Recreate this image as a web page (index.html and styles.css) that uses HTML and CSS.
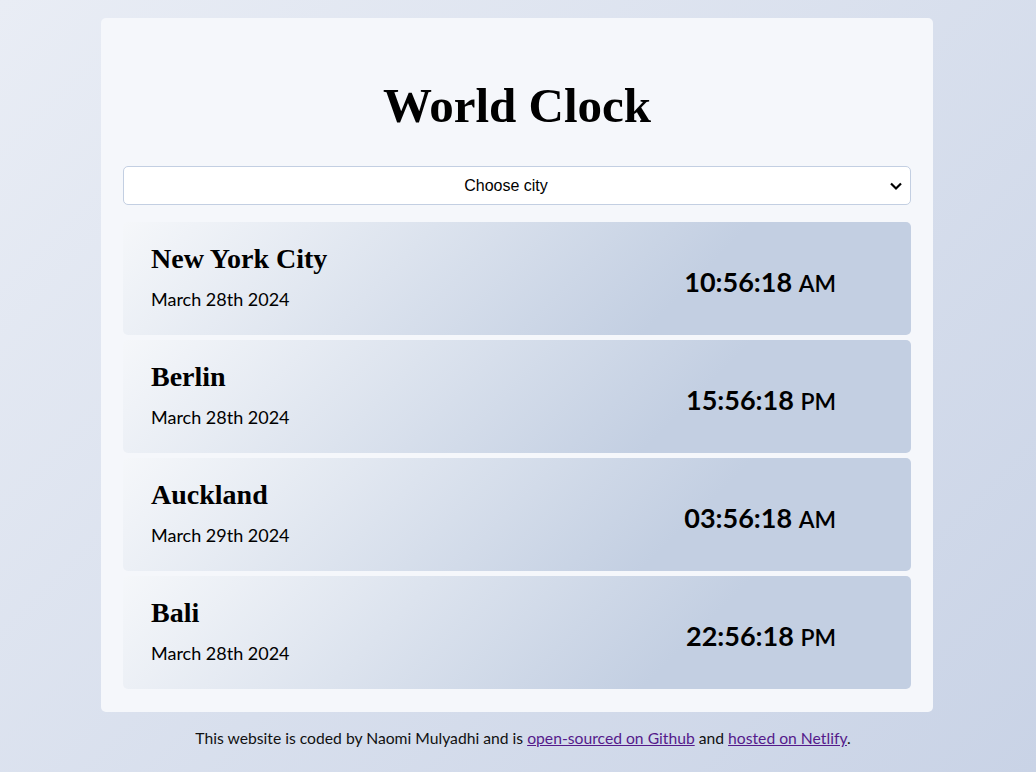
FILE: index.html
```html
<!DOCTYPE html>
<html lang="en">
<head>
<meta charset="utf-8">
<title>World Clock</title>
<link rel="stylesheet" href="styles.css">
</head>
<body>
<div class="container">
  <h1 class="title">World Clock</h1>
  <select class="city-select">
    <option>Choose city</option>
  </select>
  <div class="cities">
    <div class="city">
      <div class="city-info">
        <h2 class="city-name">New York City</h2>
        <div class="date">March 28th 2024</div>
      </div>
      <div class="time">10:56:18 <small>AM</small></div>
    </div>
    <div class="city">
      <div class="city-info">
        <h2 class="city-name">Berlin</h2>
        <div class="date">March 28th 2024</div>
      </div>
      <div class="time">15:56:18 <small>PM</small></div>
    </div>
    <div class="city">
      <div class="city-info">
        <h2 class="city-name">Auckland</h2>
        <div class="date">March 29th 2024</div>
      </div>
      <div class="time">03:56:18 <small>AM</small></div>
    </div>
    <div class="city">
      <div class="city-info">
        <h2 class="city-name">Bali</h2>
        <div class="date">March 28th 2024</div>
      </div>
      <div class="time">22:56:18 <small>PM</small></div>
    </div>
  </div>
</div>
<footer class="footer">This website is coded by Naomi Mulyadhi and is <a href="#" class="link">open-sourced on Github</a> and <a href="#" class="link">hosted on Netlify</a>.</footer>
</body>
</html>
```
FILE: styles.css
```css
html {
  min-height: 100%;
  background: linear-gradient(135deg, #e9edf5 0%, #c9d3e6 100%);
}
body {
  margin: 0;
  padding: 18px 0 0;
  font-family: Lato, "Liberation Sans", sans-serif;
  color: #000;
}
.container {
  width: 788px;
  margin: 0 auto;
  position: relative;
  left: -1px;
  background: #f5f7fb;
  border-radius: 5px;
  padding: 22px 22px 23px;
}
.title {
  font-family: "Liberation Serif", serif;
  font-weight: 700;
  font-size: 49px;
  text-align: center;
  margin: 33px 0 27px;
  line-height: 66px;
}
.city-select {
  display: block;
  width: 100%;
  height: 39px;
  font-family: "Liberation Sans", Arial, sans-serif;
  font-size: 16px;
  text-align: center;
  text-align-last: center;
  appearance: none;
  -webkit-appearance: none;
  padding: 0 30px 0 8px;
  background: #fff url("data:image/svg+xml,%3Csvg xmlns='http://www.w3.org/2000/svg' width='14' height='10' viewBox='0 0 14 10'%3E%3Cpath d='M2 2.5l5 5 5-5' fill='none' stroke='%23000' stroke-width='2.2'/%3E%3C/svg%3E") no-repeat right 7px center;
  border: 1px solid #c3cfe2;
  border-radius: 5px;
  color: #000;
  margin: 0 0 17px;
}
.cities {
  display: flex;
  flex-direction: column;
  gap: 5px;
}
.city {
  display: flex;
  justify-content: space-between;
  align-items: center;
  height: 113px;
  box-sizing: border-box;
  padding: 0 75px 0 28px;
  border-radius: 5px;
  background: linear-gradient(135deg, #f5f7fa 0%, #c3cfe2 70%, #c3cfe2 100%);
}
.city-info {
  padding-bottom: 5px;
}
.city-name {
  font-family: "Liberation Serif", serif;
  font-weight: 700;
  font-size: 28px;
  margin: 0 0 12px;
  line-height: 34px;
}
.date {
  font-size: 18px;
  line-height: 22px;
}
.time {
  font-weight: 700;
  font-size: 27px;
  margin-top: 6px;
}
.time small {
  font-size: 23px;
  font-weight: 600;
}
.footer {
  text-align: center;
  font-size: 15.7px;
  margin-top: 17px;
  padding-left: 10px;
  color: #111;
}
.link {
  color: #551a8b;
}
```
